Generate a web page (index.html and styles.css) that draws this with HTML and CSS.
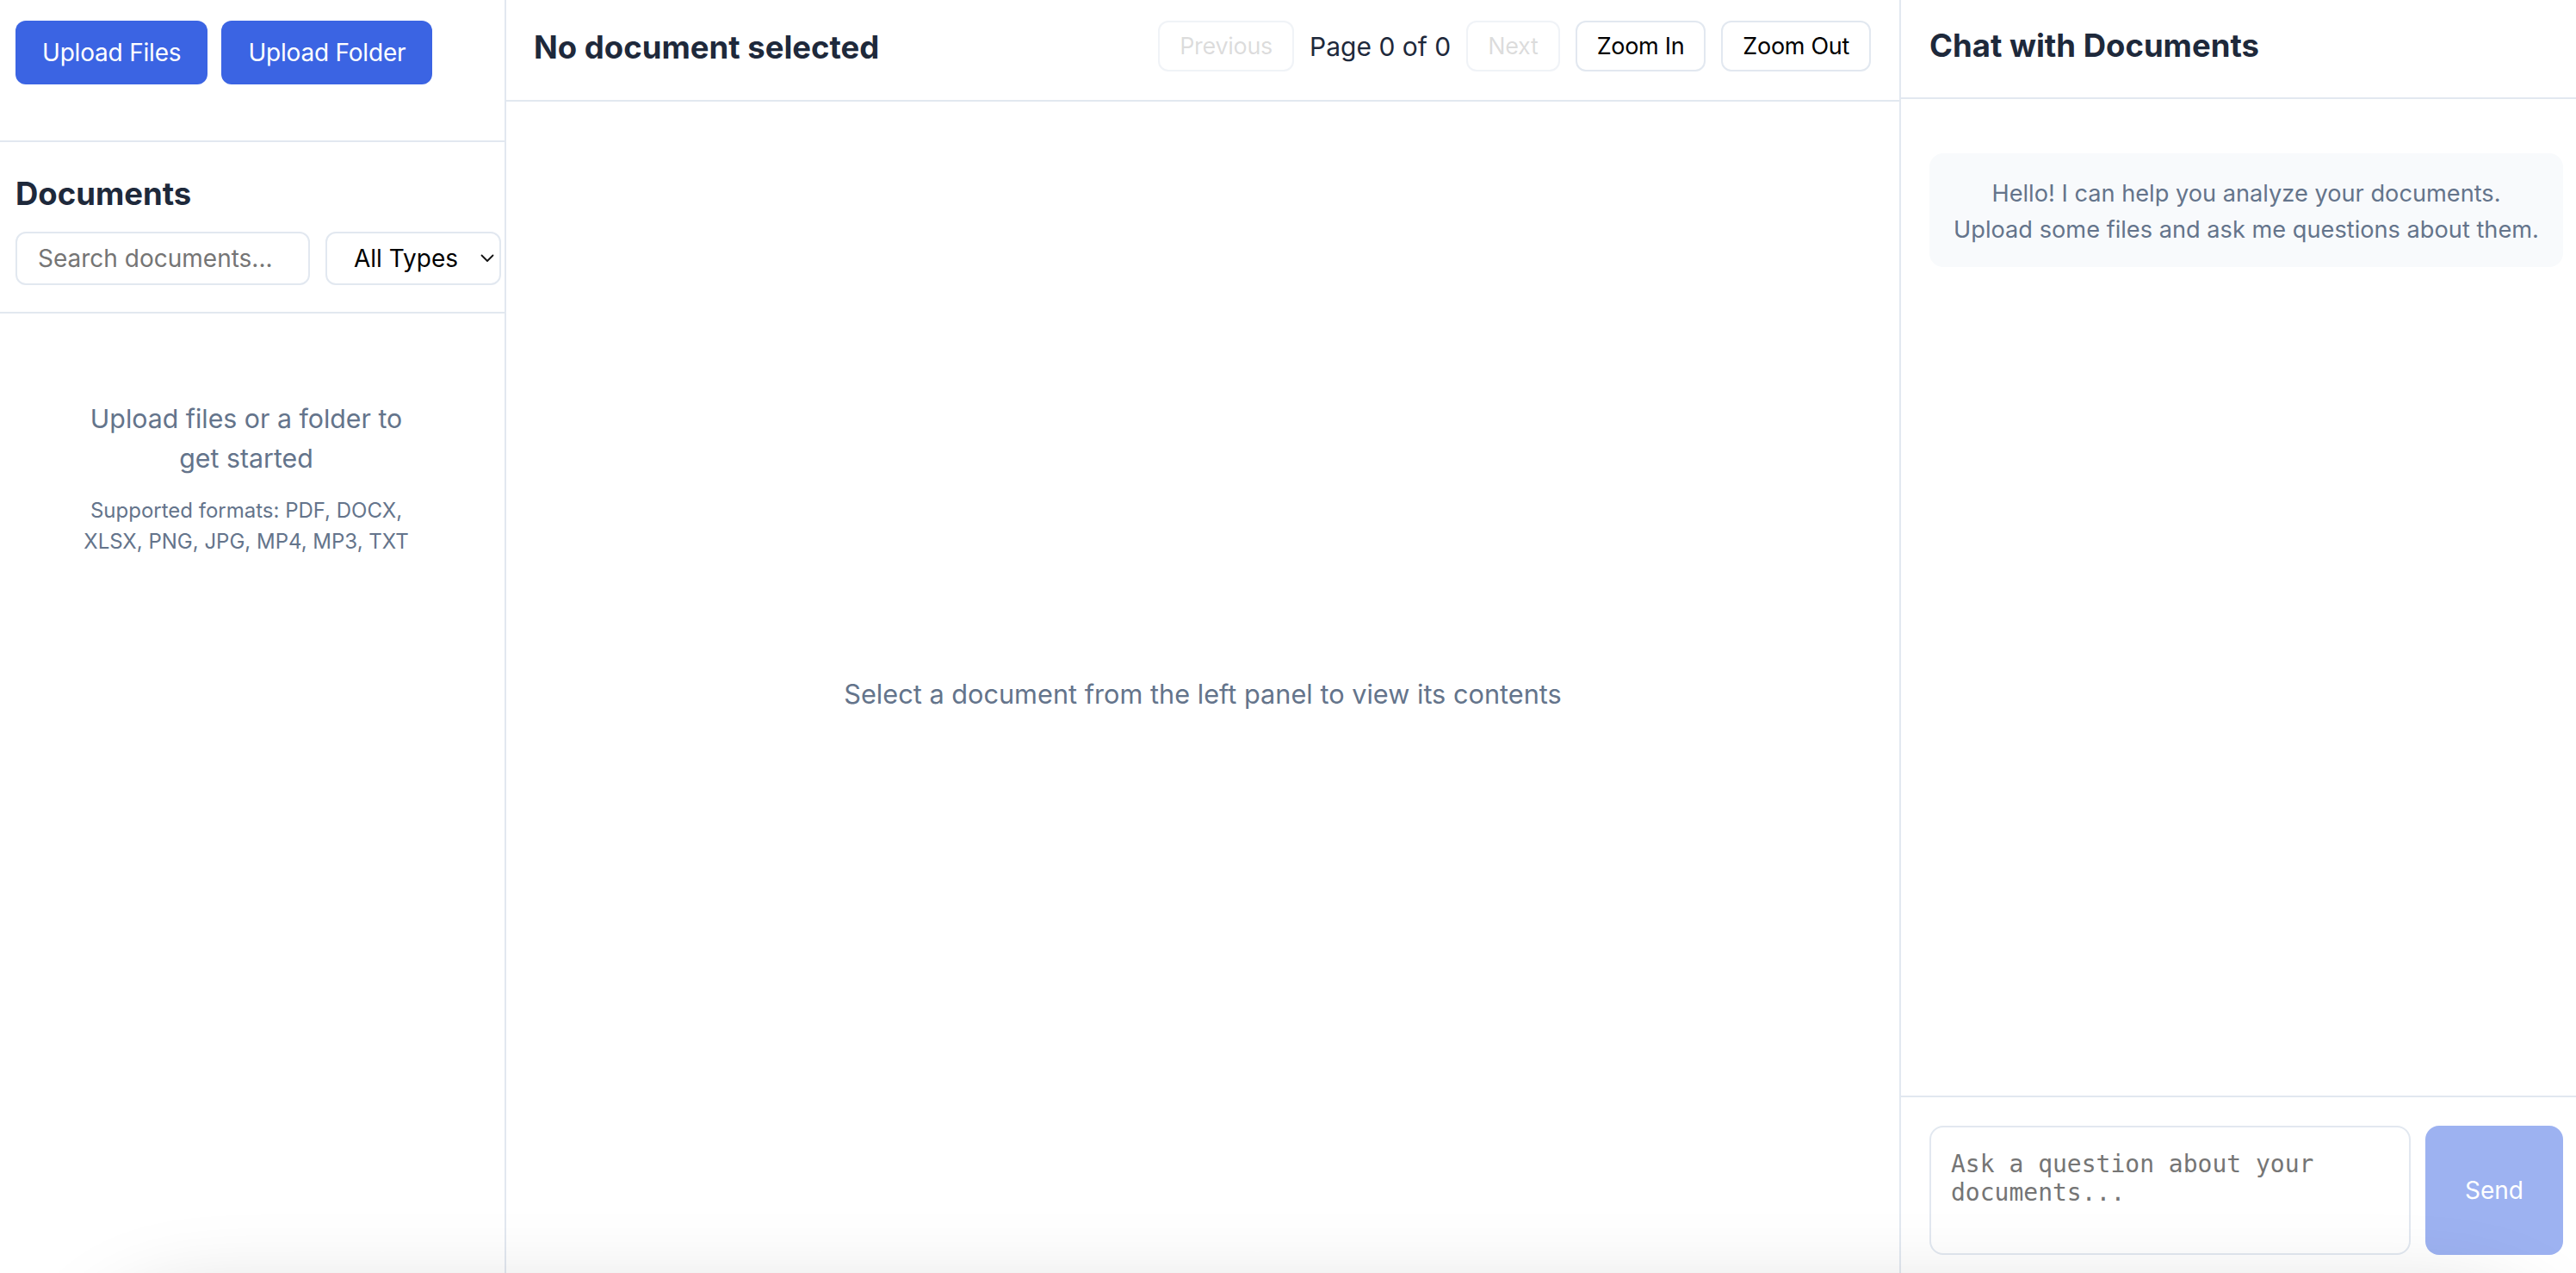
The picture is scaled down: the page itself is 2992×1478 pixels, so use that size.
FILE: index.html
```html
<!DOCTYPE html>
<html lang="en">
<head>
<meta charset="utf-8">
<title>Document Viewer</title>
<link rel="stylesheet" href="styles.css">
</head>
<body>
<div class="app">
  <aside class="sidebar">
    <div class="upload-bar">
      <button class="btn-primary">Upload Files</button>
      <button class="btn-primary">Upload Folder</button>
    </div>
    <div class="doc-section">
      <h2 class="section-title">Documents</h2>
      <div class="filters">
        <input class="search" type="text" placeholder="Search documents...">
        <div class="select-wrap">
          <select class="type-select"><option>All Types</option></select>
          <svg class="chevron" viewBox="0 0 16 10" width="16" height="10"><path d="M1.5 1.5 L8 8 L14.5 1.5" fill="none" stroke="#111" stroke-width="1.8" stroke-linecap="round" stroke-linejoin="round"/></svg>
        </div>
      </div>
    </div>
    <div class="empty">
      <p class="empty-main">Upload files or a folder to get started</p>
      <p class="empty-sub">Supported formats: PDF, DOCX, XLSX, PNG, JPG, MP4, MP3, TXT</p>
    </div>
  </aside>

  <main class="viewer">
    <header class="viewer-header">
      <h1 class="viewer-title">No document selected</h1>
      <div class="controls">
        <button class="btn-outline" disabled>Previous</button>
        <span class="page-info">Page 0 of 0</span>
        <button class="btn-outline" disabled>Next</button>
        <button class="btn-outline">Zoom In</button>
        <button class="btn-outline">Zoom Out</button>
      </div>
    </header>
    <div class="viewer-body">
      <p class="viewer-empty">Select a document from the left panel to view its contents</p>
    </div>
  </main>

  <section class="chat">
    <header class="chat-header">
      <h2 class="chat-title">Chat with Documents</h2>
    </header>
    <div class="messages">
      <div class="bubble">Hello! I can help you analyze your documents.<br>Upload some files and ask me questions about them.</div>
    </div>
    <div class="composer">
      <textarea class="chat-input" placeholder="Ask a question about your documents..."></textarea>
      <button class="btn-send" disabled>Send</button>
    </div>
  </section>
</div>
<div class="window-shadow"></div>
</body>
</html>
```

FILE: styles.css
```css
* { box-sizing: border-box; }

html, body {
  margin: 0;
  padding: 0;
  background: #ffffff;
  overflow: hidden;
}

body {
  font-family: Inter, "Noto Sans", sans-serif;
  color: #1e293b;
}

.app {
  display: flex;
  height: 1490px;
  width: 2992px;
}

/* ---------- Sidebar ---------- */
.sidebar {
  width: 588px;
  flex: none;
  border-right: 2px solid #e2e8f0;
  display: flex;
  flex-direction: column;
}

.upload-bar {
  display: flex;
  gap: 16px;
  padding: 24px 18px 0;
  height: 165px;
  border-bottom: 2px solid #e2e8f0;
}

.btn-primary {
  height: 74px;
  padding: 0 31px;
  border: none;
  border-radius: 12px;
  background: #3b64e3;
  color: #ffffff;
  font-family: Inter, "Noto Sans", sans-serif;
  font-size: 28px;
  letter-spacing: -0.2px;
}

.doc-section {
  padding: 39px 4px 31px 18px;
  border-bottom: 2px solid #e2e8f0;
}

.section-title {
  margin: 0 0 22px;
  font-size: 36.5px;
  line-height: 43px;
  font-weight: 700;
  color: #1e293b;
}

.filters {
  display: flex;
  gap: 18px;
}

.search {
  width: 342px;
  height: 62px;
  border: 2px solid #e2e8f0;
  border-radius: 12px;
  padding: 0 24px;
  font-family: Inter, "Noto Sans", sans-serif;
  font-size: 28px;
  color: #1e293b;
  outline: none;
}

.search::placeholder { color: #757575; }

.select-wrap {
  position: relative;
  width: 204px;
  height: 62px;
}

.type-select {
  appearance: none;
  -webkit-appearance: none;
  width: 100%;
  height: 100%;
  border: 2px solid #e2e8f0;
  border-radius: 12px;
  background: #ffffff;
  padding: 0 0 0 31px;
  font-family: Inter, "Noto Sans", sans-serif;
  font-size: 28px;
  color: #000000;
}

.chevron {
  position: absolute;
  right: 8px;
  top: 26px;
  pointer-events: none;
}

.empty {
  padding: 99px 32px 0 18px;
  text-align: center;
}

.empty-main {
  margin: 0 auto;
  max-width: 400px;
  font-size: 30.3px;
  line-height: 46px;
  color: #64748b;
}

.empty-sub {
  margin: 20px auto 0;
  max-width: 400px;
  font-size: 24px;
  line-height: 36px;
  color: #64748b;
}

/* ---------- Viewer ---------- */
.viewer {
  flex: 1;
  min-width: 0;
  display: flex;
  flex-direction: column;
  border-right: 2px solid #e2e8f0;
}

.viewer-header {
  display: flex;
  align-items: center;
  justify-content: space-between;
  padding: 24px 33px 33px 32px;
  border-bottom: 2px solid #e2e8f0;
}

.viewer-title {
  margin: 4px 0 0;
  font-size: 36.5px;
  line-height: 43px;
  font-weight: 700;
  color: #1e293b;
}

.controls {
  display: flex;
  align-items: center;
  gap: 18px;
}

.btn-outline {
  height: 59px;
  padding: 0 23px;
  border: 2px solid #e2e8f0;
  border-radius: 12px;
  background: #ffffff;
  color: #000000;
  font-family: Inter, "Noto Sans", sans-serif;
  font-size: 27px;
  letter-spacing: -0.3px;
}

.btn-outline:disabled {
  opacity: 0.5;
  color: rgba(16, 16, 16, 0.3);
}

.page-info {
  font-size: 30px;
  color: #1e293b;
}

.viewer-body {
  flex: 1;
  display: flex;
  align-items: center;
  justify-content: center;
}

.viewer-empty {
  margin: 2px 0 0;
  font-size: 30.7px;
  color: #64748b;
}

/* ---------- Chat ---------- */
.chat {
  width: 784px;
  flex: none;
  display: flex;
  flex-direction: column;
}

.chat-header {
  padding: 32px 15px 38px 33px;
  border-bottom: 2px solid #e2e8f0;
}

.chat-title {
  margin: 0;
  font-size: 36.5px;
  line-height: 43px;
  font-weight: 700;
  color: #1e293b;
}

.messages {
  flex: 1;
  padding: 63px 15px 0 33px;
}

.bubble {
  background: #f8fafc;
  border-radius: 16px;
  padding: 26px 16px 22px;
  text-align: center;
  font-size: 27.2px;
  line-height: 42px;
  color: #64748b;
}

.composer {
  display: flex;
  gap: 17px;
  padding: 33px 15px 33px 33px;
  border-top: 2px solid #e2e8f0;
}

.chat-input {
  flex: 1;
  height: 150px;
  resize: none;
  border: 2px solid #e2e8f0;
  border-radius: 16px;
  padding: 26px 23px 20px;
  font-family: "DejaVu Sans Mono", monospace;
  font-size: 28px;
  color: #1e293b;
  outline: none;
}

.chat-input::placeholder { color: #757575; }

.btn-send {
  width: 160px;
  height: 150px;
  border: none;
  border-radius: 16px;
  background: #9db2f1;
  color: #ffffff;
  font-family: Inter, "Noto Sans", sans-serif;
  font-size: 28px;
}

/* ---------- bottom window shadow overlay ---------- */
.window-shadow {
  position: fixed;
  left: 110px;
  right: 30px;
  top: 1530px;
  height: 300px;
  border-radius: 120px;
  box-shadow: 0 0 110px 10px rgba(0, 0, 0, 0.22);
  pointer-events: none;
}
```
